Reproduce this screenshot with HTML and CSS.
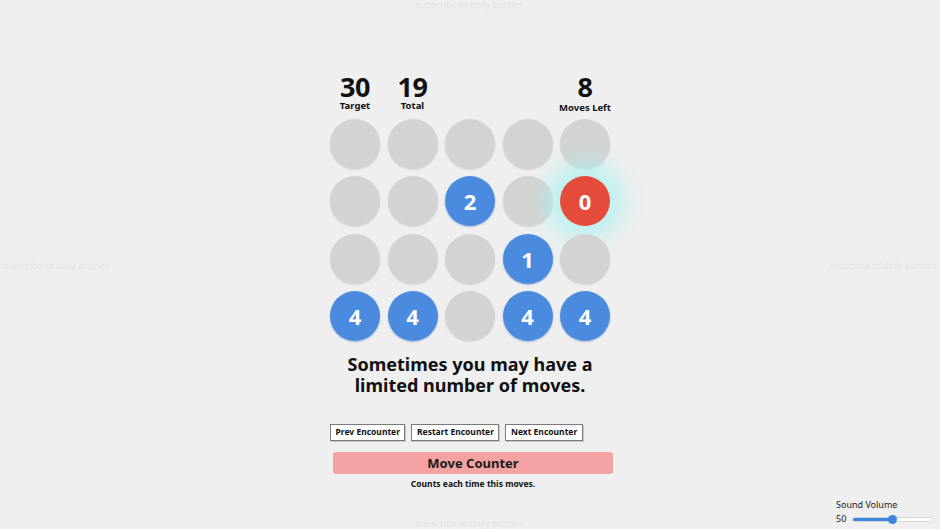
FILE: index.html
```html
<!DOCTYPE html>
<html>
<head>
<meta charset="utf-8">
<link rel="stylesheet" href="styles.css">
</head>
<body>
<div class="ghost ghost-top">subscribe to daily puzzles</div>
<div class="ghost ghost-left">subscribe to daily puzzles</div>
<div class="ghost ghost-right">subscribe to daily puzzles</div>
<div class="ghost ghost-bottom">subscribe to daily puzzles</div>

<main class="game">
  <div class="stats">
    <div class="stat"><div class="num">30</div><div class="lbl">Target</div></div>
    <div class="stat"><div class="num">19</div><div class="lbl">Total</div></div>
    <div class="stat"></div>
    <div class="stat"></div>
    <div class="stat stat-moves"><div class="num">8</div><div class="lbl">Moves Left</div></div>
  </div>

  <div class="board">
    <div class="cell"></div><div class="cell"></div><div class="cell"></div><div class="cell"></div><div class="cell"></div>
    <div class="cell"></div><div class="cell"></div><div class="cell blue">2</div><div class="cell"></div><div class="cell red">0</div>
    <div class="cell"></div><div class="cell"></div><div class="cell"></div><div class="cell blue">1</div><div class="cell"></div>
    <div class="cell blue">4</div><div class="cell blue">4</div><div class="cell"></div><div class="cell blue">4</div><div class="cell blue">4</div>
  </div>

  <p class="message">Sometimes you may have a<br>limited number of moves.</p>

  <div class="buttons">
    <button class="btn">Prev Encounter</button>
    <button class="btn">Restart Encounter</button>
    <button class="btn">Next Encounter</button>
  </div>

  <div class="counter">Move Counter</div>
  <div class="counter-desc">Counts each time this moves.</div>
</main>

<div class="volume">
  <div class="vol-label">Sound Volume</div>
  <div class="vol-row">
    <span class="vol-val">50</span>
    <div class="slider"><div class="slider-fill"></div><div class="slider-thumb"></div></div>
  </div>
</div>
</body>
</html>
```

FILE: styles.css
```css
html, body {
  margin: 0;
  padding: 0;
  background: #efefef;
  width: 940px;
  height: 529px;
  overflow: hidden;
  font-family: "Noto Sans", "Open Sans", sans-serif;
  color: #111;
}
body {
  position: relative;
}
.ghost {
  position: absolute;
  font-size: 9px;
  line-height: 10px;
  color: #e3e3e3;
  white-space: nowrap;
}
.ghost-top { top: 0; left: 416px; }
.ghost-bottom { top: 519px; left: 416px; }
.ghost-left { top: 261px; left: 2px; }
.ghost-right { top: 261px; left: 829px; }

.game {
  width: 280px;
  margin: 0 auto;
  padding-top: 74px;
  display: flex;
  flex-direction: column;
  align-items: center;
}
.stats {
  display: grid;
  grid-template-columns: repeat(5, 50px);
  column-gap: 7.5px;
  height: 45px;
}
.stat {
  display: flex;
  flex-direction: column;
  align-items: center;
}
.num {
  font-size: 27px;
  font-weight: 700;
  line-height: 26px;
  letter-spacing: -0.5px;
}
.lbl {
  font-size: 9.5px;
  font-weight: 700;
  line-height: 11px;
  white-space: nowrap;
}
.stat-moves .lbl { margin-top: 2px; }

.board {
  display: grid;
  grid-template-columns: repeat(5, 50px);
  grid-auto-rows: 50px;
  column-gap: 7.5px;
  row-gap: 7.3px;
}
.cell {
  width: 50px;
  height: 50px;
  border-radius: 50%;
  background: #d3d3d3;
  box-shadow: 0 1px 2px rgba(0,0,0,0.12);
  display: flex;
  align-items: center;
  justify-content: center;
  color: #fff;
  font-size: 22px;
  font-weight: 700;
}
.cell.blue {
  background: #4a8be0;
  box-shadow: 0 1px 2px rgba(40,80,160,0.35);
}
.cell.red {
  background: #e54b3a;
  box-shadow: 0 0 22px 14px rgba(170, 240, 242, 0.75);
}

.message {
  margin: 13px 0 0;
  font-size: 18px;
  font-weight: 700;
  line-height: 21px;
  text-align: center;
  color: #111;
}

.buttons {
  margin-top: 28px;
  display: flex;
  gap: 6px;
  align-self: flex-start;
}
.btn {
  font-family: "Noto Sans", "Open Sans", sans-serif;
  font-size: 8.5px;
  font-weight: 700;
  color: #111;
  background: #fff;
  border: 1px solid #7a7a7a;
  box-shadow: 1px 1px 0 #c8c8c8;
  height: 17px;
  padding: 0 4.5px;
  line-height: 14px;
  margin: 0;
}

.counter {
  margin-top: 11px;
  width: 280px;
  height: 22px;
  margin-left: 6px;
  background: #f4a3a2;
  border-radius: 3px;
  text-align: center;
  font-size: 13px;
  font-weight: 700;
  line-height: 22px;
  color: #1a1a1a;
}
.counter-desc {
  margin-top: 4px;
  margin-left: 6px;
  font-size: 8.5px;
  font-weight: 700;
  line-height: 12px;
}

.volume {
  position: absolute;
  left: 836px;
  top: 498px;
  font-size: 9px;
  color: #222;
}
.vol-label {
  line-height: 13px;
}
.vol-row {
  display: flex;
  align-items: center;
  gap: 6px;
  margin-top: 2px;
}
.vol-val {
  line-height: 12px;
}
.slider {
  position: relative;
  width: 81px;
  height: 5px;
  background: #fff;
  border: 1px solid #d6d6d6;
  border-radius: 3px;
  box-sizing: border-box;
}
.slider-fill {
  width: 41px;
  height: 100%;
  background: #3d84e0;
  border-radius: 3px;
}
.slider-thumb {
  position: absolute;
  left: 35px;
  top: -3px;
  width: 9px;
  height: 9px;
  border-radius: 50%;
  background: #3d84e0;
}
```
